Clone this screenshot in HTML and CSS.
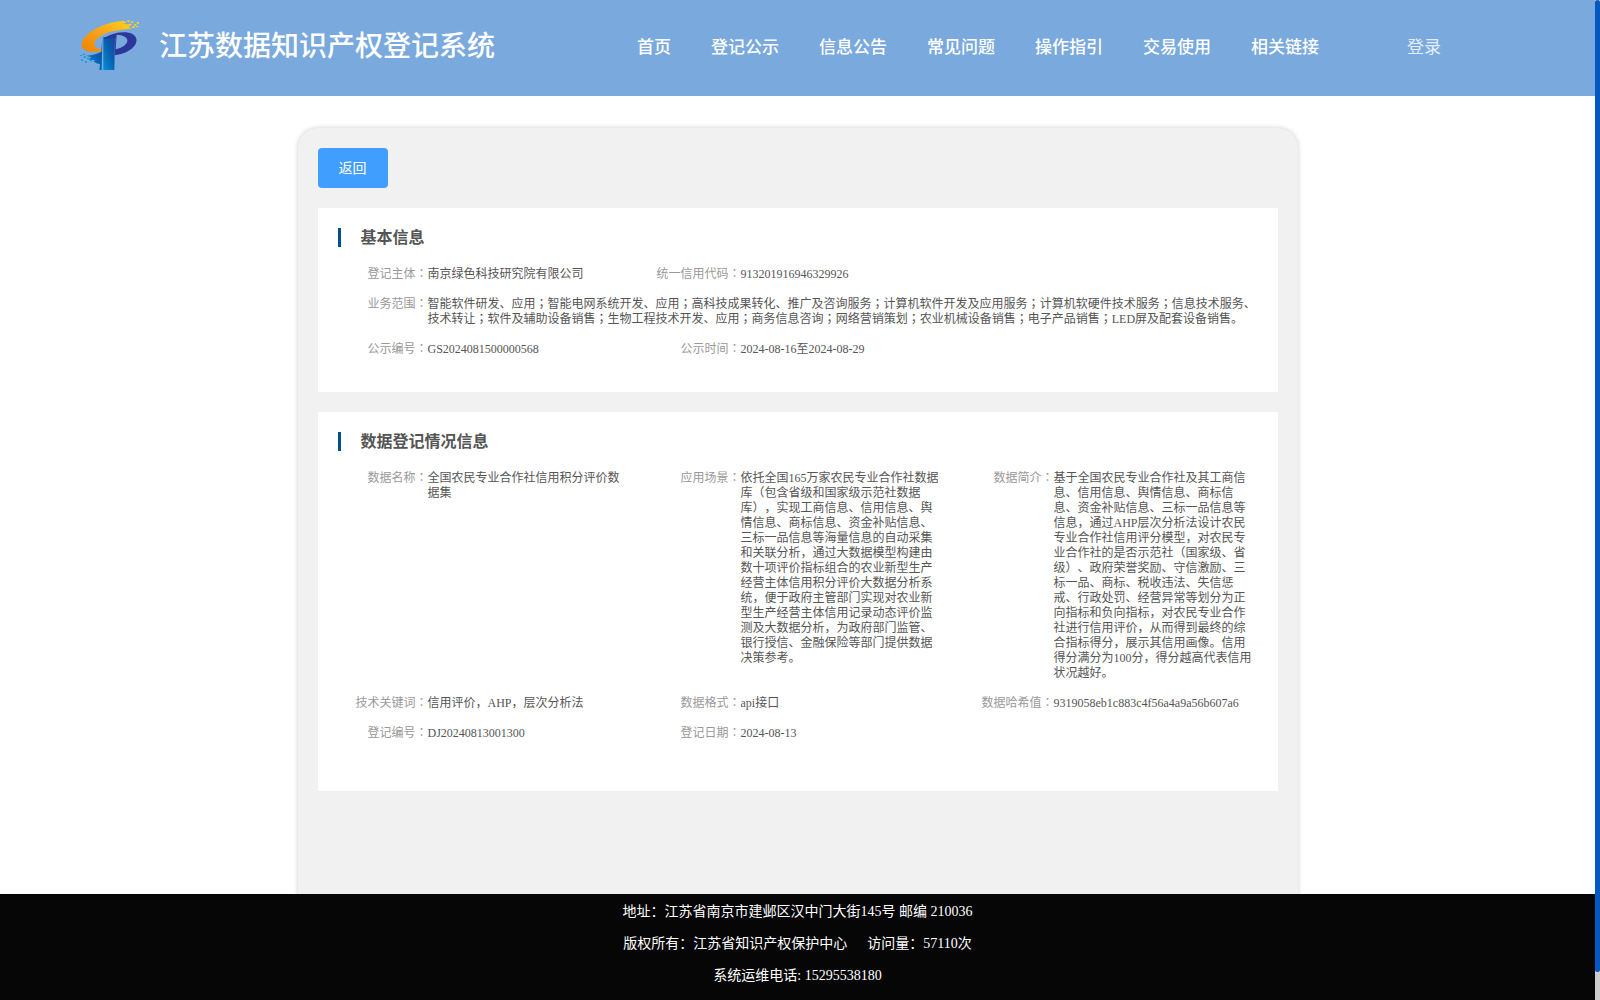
FILE: index.html
```html
<!DOCTYPE html>
<html lang="zh-CN">
<head>
<meta charset="utf-8">
<title>江苏数据知识产权登记系统</title>
<link rel="stylesheet" href="styles.css">
</head>
<body>
<div class="page">
  <header class="header">
    <svg class="logo" viewBox="0 0 216 192" aria-hidden="true">
      <defs>
        <linearGradient id="orange" x1="0" y1="1" x2="1" y2="0"><stop offset="0" stop-color="#f08200"/><stop offset=".5" stop-color="#f9a21c"/><stop offset="1" stop-color="#fdd516"/></linearGradient>
        <linearGradient id="stem" x1="0" y1="1" x2="1" y2="0"><stop offset="0" stop-color="#0090d8"/><stop offset=".55" stop-color="#0760b0"/><stop offset="1" stop-color="#1d3f9c"/></linearGradient>
      </defs>
      <path fill="url(#orange)" d="M23 101C20 70 78 31 150 26l3 5-5 4 22 3-5 8 8 4C128 53 100 60 84 70 66 81 58 92 62 101c3 7 12 9 20 10v7C52 122 26 119 23 101z"/>
      <path fill="#fdd516" d="M160 25h7v5h-7zM172 28h6v5h-6zM151 29h5v5h-5zM165 35h7v5h-7zM181 36h6v5h-6zM188 30h7v5h-7zM175 43h7v5h-7zM187 42h6v4h-6z"/>
      <path fill="url(#stem)" d="M88 75h35l-2 99H88z"/>
      <path fill="url(#stem)" d="M85 75l-2 99h-7l2-18c-8 0-14-3-20-8l6-3-20-2 7-7-15-5c18-1 33-5 46-12z"/>
      <path fill="#2d379b" fill-rule="evenodd" d="M90 78c20-12 43-18 66-17 53 5 38 60-34 69l2-52-35 2zM128 68l-3 44c23-5 36-17 35-28-1-9-13-15-32-16z"/>
      <path fill="#159bdc" d="M19 128h6v4h-6zM29 133h7v5h-7zM21 142h6v5h-6zM39 137h7v5h-7zM33 147h6v5h-6zM47 143h7v5h-7zM27 125h6v4h-6z"/>
    </svg>
    <h1 class="brand">江苏数据知识产权登记系统</h1>
    <nav class="nav">
      <a>首页</a><a>登记公示</a><a>信息公告</a><a>常见问题</a><a>操作指引</a><a>交易使用</a><a>相关链接</a>
    </nav>
    <a class="login">登录</a>
  </header>

  <main class="main">
    <div class="sheet">
      <button class="back">返回</button>

      <section class="panel basic">
        <h2>基本信息</h2>
        <dl class="fields">
          <div class="field"><dt>登记主体<span class="mid" lang="zh-TW">：</span></dt><dd>南京绿色科技研究院有限公司</dd></div>
          <div class="field"><dt>统一信用代码<span class="mid" lang="zh-TW">：</span></dt><dd>913201916946329926</dd></div>
          <div class="field full"><dt>业务范围<span class="mid" lang="zh-TW">：</span></dt><dd>智能软件研发、应用<span class="mid" lang="zh-TW">；</span>智能电网系统开发、应用<span class="mid" lang="zh-TW">；</span>高科技成果转化、推广及咨询服务<span class="mid" lang="zh-TW">；</span>计算机软件开发及应用服务<span class="mid" lang="zh-TW">；</span>计算机软硬件技术服务<span class="mid" lang="zh-TW">；</span>信息技术服务、<br>技术转让<span class="mid" lang="zh-TW">；</span>软件及辅助设备销售<span class="mid" lang="zh-TW">；</span>生物工程技术开发、应用<span class="mid" lang="zh-TW">；</span>商务信息咨询<span class="mid" lang="zh-TW">；</span>网络营销策划<span class="mid" lang="zh-TW">；</span>农业机械设备销售<span class="mid" lang="zh-TW">；</span>电子产品销售<span class="mid" lang="zh-TW">；</span>LED屏及配套设备销售。</dd></div>
          <div class="field"><dt>公示编号<span class="mid" lang="zh-TW">：</span></dt><dd>GS2024081500000568</dd></div>
          <div class="field"><dt>公示时间<span class="mid" lang="zh-TW">：</span></dt><dd>2024-08-16至2024-08-29</dd></div>
        </dl>
      </section>

      <section class="panel data">
        <h2>数据登记情况信息</h2>
        <dl class="fields">
          <div class="field"><dt>数据名称<span class="mid" lang="zh-TW">：</span></dt><dd>全国农民专业合作社信用积分评价数<br>据集</dd></div>
          <div class="field"><dt>应用场景<span class="mid" lang="zh-TW">：</span></dt><dd>依托全国165万家农民专业合作社数据<br>库（包含省级和国家级示范社数据<br>库），实现工商信息、信用信息、舆<br>情信息、商标信息、资金补贴信息、<br>三标一品信息等海量信息的自动采集<br>和关联分析，通过大数据模型构建由<br>数十项评价指标组合的农业新型生产<br>经营主体信用积分评价大数据分析系<br>统，便于政府主管部门实现对农业新<br>型生产经营主体信用记录动态评价监<br>测及大数据分析，为政府部门监管、<br>银行授信、金融保险等部门提供数据<br>决策参考。</dd></div>
          <div class="field"><dt>数据简介<span class="mid" lang="zh-TW">：</span></dt><dd>基于全国农民专业合作社及其工商信<br>息、信用信息、舆情信息、商标信<br>息、资金补贴信息、三标一品信息等<br>信息，通过AHP层次分析法设计农民<br>专业合作社信用评分模型，对农民专<br>业合作社的是否示范社（国家级、省<br>级）、政府荣誉奖励、守信激励、三<br>标一品、商标、税收违法、失信惩<br>戒、行政处罚、经营异常等划分为正<br>向指标和负向指标，对农民专业合作<br>社进行信用评价，从而得到最终的综<br>合指标得分，展示其信用画像。信用<br>得分满分为100分，得分越高代表信用<br>状况越好。</dd></div>
          <div class="field"><dt>技术关键词<span class="mid" lang="zh-TW">：</span></dt><dd>信用评价，AHP，层次分析法</dd></div>
          <div class="field"><dt>数据格式<span class="mid" lang="zh-TW">：</span></dt><dd>api接口</dd></div>
          <div class="field"><dt>数据哈希值<span class="mid" lang="zh-TW">：</span></dt><dd>9319058eb1c883c4f56a4a9a56b607a6</dd></div>
          <div class="field"><dt>登记编号<span class="mid" lang="zh-TW">：</span></dt><dd>DJ20240813001300</dd></div>
          <div class="field"><dt>登记日期<span class="mid" lang="zh-TW">：</span></dt><dd>2024-08-13</dd></div>
        </dl>
      </section>
    </div>
  </main>

  <footer class="footer">
    <p>地址：江苏省南京市建邺区汉中门大街145号 邮编 210036</p>
    <p><span>版权所有：江苏省知识产权保护中心</span><span class="visits">访问量：57110次</span></p>
    <p>系统运维电话: 15295538180</p>
  </footer>
</div>
<div class="scrollbar"><div class="thumb"></div></div>
</body>
</html>
```

FILE: styles.css
```css
* {
  box-sizing: border-box;
}

body {
  margin: 0;
  height: 1000px;
  display: flex;
  overflow: hidden;
  background: #fff;
  font-family: "Liberation Serif", "Noto Sans CJK SC", serif;
  text-spacing-trim: space-all;
}

h1, h2, p, dl, dd {
  margin: 0;
}

.page {
  width: 1595px;
  display: flex;
  flex-direction: column;
}

.header {
  height: 96px;
  flex: none;
  display: flex;
  align-items: flex-start;
  padding-left: 74px;
  background: #79a9dd;
  color: #fff;
  white-space: nowrap;
}

.logo {
  width: 72px;
  height: 64px;
  margin-top: 12px;
}

.brand {
  width: 478px;
  margin-left: 13px;
  font-size: 28px;
  line-height: 88px;
  font-weight: 500;
}

.nav {
  display: flex;
  gap: 40px;
  font-size: 17px;
  line-height: 92px;
  font-weight: 500;
}

.nav,
.brand {
  font-family: "Noto Sans CJK SC", sans-serif;
}

.login {
  margin-left: 88px;
  font-size: 17px;
  line-height: 95px;
  color: #e4eefa;
}

.main {
  flex: 1;
  min-height: 0;
  overflow: hidden;
  padding-top: 32px;
}

.sheet {
  width: 1000px;
  height: 900px;
  margin: 0 auto;
  padding: 20px;
  border-radius: 20px;
  background: #f1f1f1;
  box-shadow: 0 0 5px rgba(0, 0, 0, .2);
}

.back {
  display: block;
  width: 70px;
  height: 40px;
  padding: 0 0 2px;
  border: 0;
  border-radius: 4px;
  background: #409eff;
  color: #fff;
  font: 14px/38px "Noto Sans CJK SC", sans-serif;
}

.panel {
  margin-top: 20px;
  padding: 20px 20px 0;
  background: #fff;
}

.basic {
  height: 184px;
}

.data {
  height: 379px;
}

.panel h2 {
  height: 19px;
  border-left: 3px solid #00508f;
  padding-left: 20px;
  font-size: 16px;
  line-height: 19px;
  color: #555;
}

.fields {
  display: grid;
  grid-template-columns: repeat(3, 313px);
  row-gap: 15px;
  margin: 20px 0 0 -10px;
  font-size: 12px;
  line-height: 15px;
  white-space: nowrap;
}

.field {
  display: grid;
  grid-template-columns: 100px 1fr;
}

.full {
  grid-column: 1 / -1;
}

.basic .field:nth-child(4) {
  grid-column: 1;
}

.field dt {
  text-align: right;
  color: #999;
}

.field dd {
  color: #555;
}

.mid {
  font-family: "Noto Sans CJK TC", sans-serif;
  line-height: 0;
}

.footer {
  height: 106px;
  flex: none;
  padding-top: 2px;
  background: #060606;
  color: #fff;
  font-size: 14px;
  line-height: 32px;
  text-align: center;
}

.visits {
  margin-left: 20px;
}

.scrollbar {
  width: 5px;
  background: #ccc;
}

.thumb {
  height: 972px;
  border-radius: 3px;
  background: #0558c0;
}
```
